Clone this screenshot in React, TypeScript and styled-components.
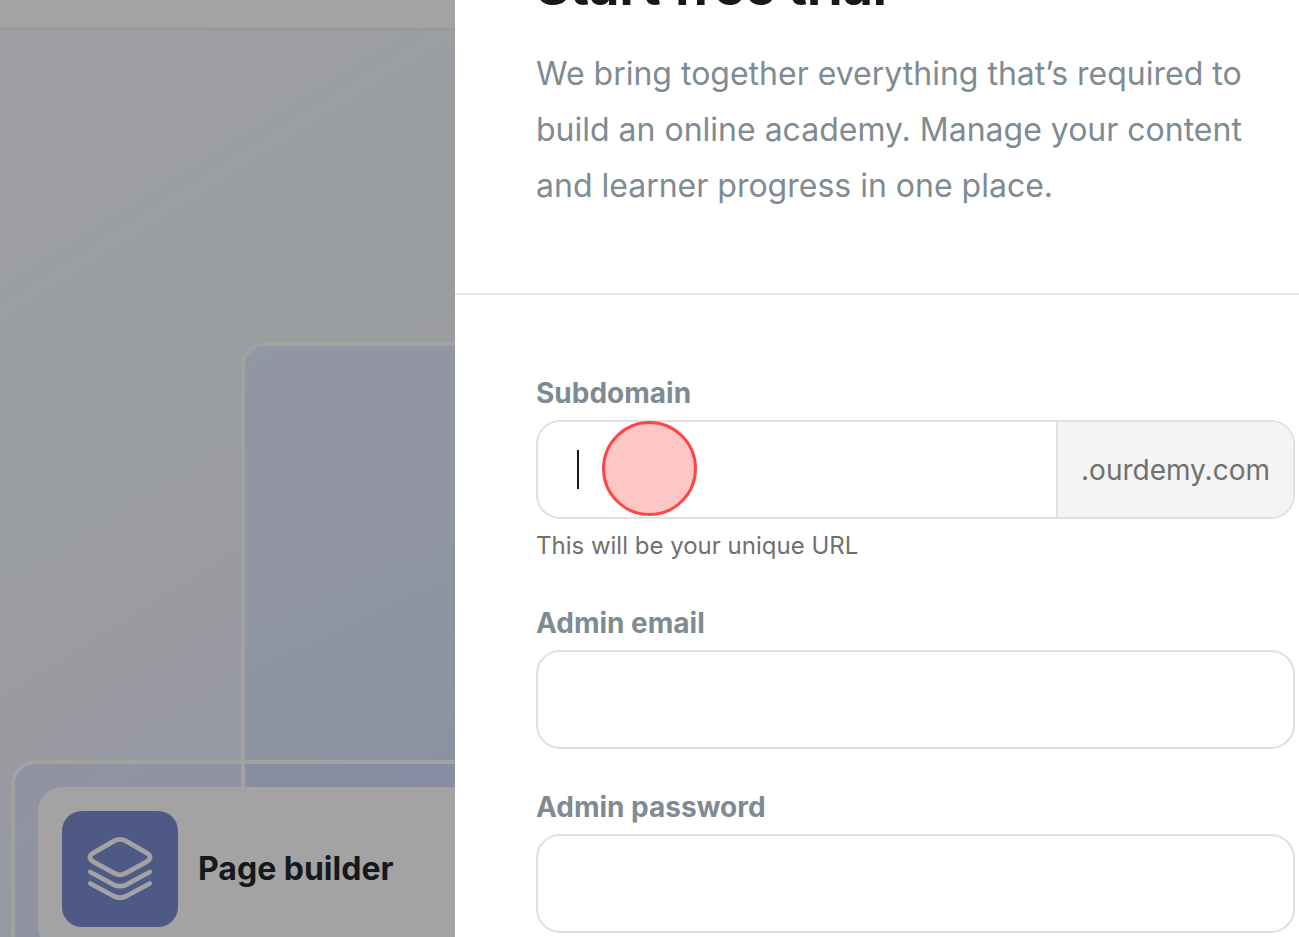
import React from "react";
import styled, { createGlobalStyle } from "styled-components";

const GlobalStyle = createGlobalStyle`
  *, *::before, *::after { box-sizing: border-box; }
  body {
    margin: 0;
    background: #fff;
    font-family: Inter, "Liberation Sans", sans-serif;
    font-optical-sizing: none;
  }
`;

const Page = styled.div`
  display: grid;
  grid-template-columns: 455px minmax(0, 1fr);
  height: 100vh;
  overflow: hidden;
`;

const Scene = styled.div`
  display: flex;
  flex-direction: column;
  min-height: 0;
  overflow: hidden;
  background: #a3a3a3;
`;

const TopBar = styled.header`
  flex: none;
  height: 30px;
  border-bottom: 2px solid #999998;
`;

const Hero = styled.section`
  flex: 1;
  min-height: 0;
  display: grid;
  grid-template-columns: 11px 230px minmax(0, 1fr);
  grid-template-rows: 312px 418px minmax(0, 1fr);
  background: linear-gradient(
    148deg,
    #9e9fa2 0%,
    #9d9ea1 18%,
    #9a9ea2 26%,
    #9a9ea1 42%,
    #9b9ca0 50%,
    #9a9ba0 58%,
    #9a99a2 64%,
    #979ba3 70%,
    #9799a2 78%,
    #9395a3 90%,
    #8f94a3 100%
  );
`;

/* The outline sits above every panel so crossing frames stay visible. */
const Frame = styled.div`
  position: relative;
  border-top-left-radius: 24px;

  &::after {
    content: "";
    position: absolute;
    inset: 0;
    z-index: 1;
    border: solid #a2a2a0;
    border-width: 4px 0 0 4px;
    border-top-left-radius: inherit;
  }
`;

const BackFrame = styled(Frame)`
  grid-column: 3;
  grid-row: 2 / 4;
  background: linear-gradient(155deg, #9099a3 0%, #9296a2 8%, #9196a2 38%, #8d95a1 50%, #8c93a2 68%, #8a8fa2 82%, #888ca2 100%);
`;

const FrontFrame = styled(Frame)`
  grid-column: 2 / 4;
  grid-row: 3;
  padding: 27px 0 0 27px;
  background: rgba(128, 136, 162, 0.35);
`;

const FeatureCard = styled.article`
  position: relative;
  z-index: 2;
  display: flex;
  align-items: center;
  gap: 20px;
  padding: 24px;
  background: #a3a3a3;
  border-radius: 24px 0 0 24px;
`;

const FeatureIcon = styled.div`
  flex: none;
  width: 116px;
  height: 116px;
  border-radius: 20px;
  background: #4e5a85;
`;

const FeatureName = styled.h3`
  margin: 0;
  color: #16191c;
  font-size: 32px;
  line-height: 40px;
  font-weight: 700;
`;

const Drawer = styled.main`
  min-width: 0;
  overflow: hidden;
  background: #fff;
`;

const Intro = styled.header`
  margin-top: -45px;
  padding: 0 4px 79px 81px;
  border-bottom: 2px solid #e8e8e8;
`;

const Title = styled.h1`
  margin: 0 0 27px;
  color: #16191c;
  font-size: 52px;
  line-height: 64px;
  font-weight: 700;
`;

const Lead = styled.p`
  margin: 0;
  max-width: 740px;
  color: #7f8b92;
  font-size: 32px;
  line-height: 56px;
`;

const Form = styled.form`
  display: flex;
  flex-direction: column;
  gap: 38px;
  padding: 78px 4px 40px 81px;
`;

const Field = styled.div`
  display: flex;
  flex-direction: column;
  gap: 7px;
`;

const Label = styled.label`
  color: #7f8b92;
  font-size: 28px;
  line-height: 40px;
  font-weight: 700;
`;

const Control = styled.div`
  position: relative;
  display: flex;
  height: 99px;
  border: 2px solid #e0e0e0;
  border-radius: 24px;
  background: #fff;
`;

const Input = styled.input`
  flex: 1;
  min-width: 0;
  padding: 0 40px;
  border: 0;
  border-radius: 24px;
  outline: 0;
  background: transparent;
  color: #16191c;
  font: inherit;
  font-size: 28px;
`;

const Suffix = styled.span`
  display: flex;
  align-items: center;
  padding: 0 23px;
  border-left: 2px solid #e0e0e0;
  border-radius: 0 22px 22px 0;
  background: #f4f4f4;
  color: #707070;
  font-size: 28px;
`;

const Caret = styled.span`
  position: absolute;
  left: 39px;
  top: 28px;
  width: 2px;
  height: 39px;
  background: #16191c;
`;

const TapMarker = styled.span`
  position: absolute;
  left: 64px;
  top: -1px;
  width: 95px;
  height: 95px;
  border: 3px solid #ff4646;
  border-radius: 50%;
  background: #ffc6c6;
  pointer-events: none;
`;

const Hint = styled.small`
  color: #707070;
  font-size: 24px;
  line-height: 39px;
`;

const LayersIcon = () => (
  <svg viewBox="0 0 116 116" fill="none" stroke="#a3a3a3" strokeWidth="4.8" strokeLinecap="round" strokeLinejoin="round" aria-hidden="true">
    <path d="M52.6 29.7Q58 27 63.4 29.7L84.5 41.8Q91.6 46.3 84.5 50.8L63.4 62.4Q58 65.2 52.6 62.4L31.5 50.8Q24.4 46.3 31.5 41.8Z" />
    <path d="M28.3 61L51.5 73.6Q58 76.8 64.5 73.6L87.7 61" />
    <path d="M28.3 72.5L51.5 85Q58 88.2 64.5 85L87.7 72.5" />
  </svg>
);

export default function App() {
  return (
    <>
      <GlobalStyle />
      <Page>
        <Scene>
          <TopBar />
          <Hero>
            <BackFrame />
            <FrontFrame>
              <FeatureCard>
                <FeatureIcon>
                  <LayersIcon />
                </FeatureIcon>
                <FeatureName>Page builder</FeatureName>
              </FeatureCard>
            </FrontFrame>
          </Hero>
        </Scene>
        <Drawer>
          <Intro>
            <Title>Start free trial</Title>
            <Lead>
              We bring together everything that’s required to build an online academy. Manage your content and learner
              progress in one place.
            </Lead>
          </Intro>
          <Form>
            <Field>
              <Label htmlFor="subdomain">Subdomain</Label>
              <Control>
                <Input id="subdomain" type="text" aria-describedby="subdomain-hint" />
                <Suffix>.ourdemy.com</Suffix>
                <Caret />
                <TapMarker />
              </Control>
              <Hint id="subdomain-hint">This will be your unique URL</Hint>
            </Field>
            <Field>
              <Label htmlFor="email">Admin email</Label>
              <Control>
                <Input id="email" type="email" />
              </Control>
            </Field>
            <Field>
              <Label htmlFor="password">Admin password</Label>
              <Control>
                <Input id="password" type="password" />
              </Control>
            </Field>
          </Form>
        </Drawer>
      </Page>
    </>
  );
}
